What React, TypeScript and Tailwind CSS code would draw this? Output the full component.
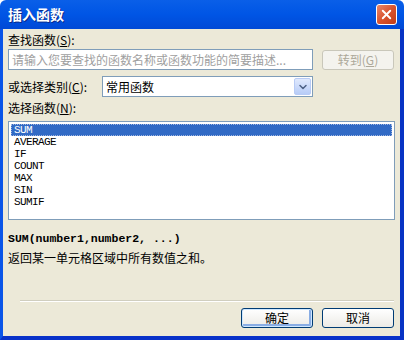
import { ChevronDown, X } from "lucide-react";

const cjk = { fontFamily: '"Noto Sans CJK SC", "Noto Sans", sans-serif' };
const mono = { fontFamily: '"Liberation Mono", "DejaVu Sans Mono", monospace' };

const items = ["SUM", "AVERAGE", "IF", "COUNT", "MAX", "SIN", "SUMIF"];

export default function App() {
  return (
    <div className="flex h-[340px] w-[404px] flex-col overflow-hidden text-[12px] text-black" style={cjk}>
      {/* title bar */}
      <div className="flex h-[29px] items-center justify-between rounded-t-[6px] bg-gradient-to-b from-[#0A5FE8] via-[#0055E5] to-[#0049D6] pl-[8px] pr-[7px]">
        <span className="text-[14px] font-bold text-white [text-shadow:1px_1px_0_#0A2A8A]">插入函数</span>
        <div className="flex h-[21px] w-[21px] items-center justify-center rounded-[3px] border border-white bg-gradient-to-br from-[#E9876A] via-[#D9532E] to-[#C13C17]">
          <X size={15} strokeWidth={3} className="text-white" />
        </div>
      </div>

      {/* client */}
      <div className="flex flex-1 flex-col border-b-[4px] border-l-[3px] border-r-[4px] border-b-[#0831C9] border-l-[#0A55E8] border-r-[#0733C4] bg-[#ECE9D8] pl-[5px] pr-[5px]">
        <div className="mt-[4px] h-[14px] leading-[14px]">
          查找函数(<span className="underline">S</span>):
        </div>
        <div className="mt-[2px] flex items-center">
          <div className="flex h-[21px] w-[305px] items-center border border-[#7F9DB9] bg-white px-[3px] text-[#A0A0A0]">
            请输入您要查找的函数名称或函数功能的简要描述...
          </div>
          <div className="ml-[9px] flex h-[20px] w-[72px] items-center justify-center rounded-[3px] border border-[#C9C7BA] bg-[#F4F3EE] text-[#ACA899]">
            转到(<span className="underline">G</span>)
          </div>
        </div>

        <div className="mt-[6px] flex items-center">
          <div className="w-[94px]">
            或选择类别(<span className="underline">C</span>):
          </div>
          <div className="flex h-[21px] w-[211px] items-center justify-between border border-[#7F9DB9] bg-white pl-[3px] pr-[1px]">
            <span>常用函数</span>
            <div className="flex h-[17px] w-[17px] items-center justify-center rounded-[2px] border border-[#B8CBF5] bg-gradient-to-b from-[#E0E9FD] to-[#B7CCF7]">
              <ChevronDown size={12} strokeWidth={3} className="text-[#4D6185]" />
            </div>
          </div>
        </div>

        <div className="mt-[4px] h-[14px] leading-[14px]">
          选择函数(<span className="underline">N</span>):
        </div>
        <div className="mt-[6px] h-[99px] border border-[#7F9DB9] bg-white p-[2px]" style={mono}>
          {items.map((name, i) => (
            <div
              key={name}
              className={
                i === 0
                  ? "flex h-[12px] items-center border border-dotted border-[#9FB5E0] bg-[#316AC5] pl-[2px] text-[11px] leading-[10px] tracking-[-0.6px] text-white"
                  : "flex h-[12px] items-center pl-[3px] text-[11px] leading-[12px] tracking-[-0.6px]"
              }
            >
              {name}
            </div>
          ))}
        </div>

        <div className="mt-[12px] h-[14px] text-[11.5px] font-bold leading-[14px]" style={mono}>
          SUM(number1,number2, ...)
        </div>
        <div className="mt-[5px] h-[14px] leading-[14px]">返回某一单元格区域中所有数值之和。</div>

        <div className="ml-[12px] mr-[1px] mt-[35px] h-[2px] border-t border-b border-t-[#D0CEBF] border-b-white" />

        <div className="mt-[6px] flex justify-end pr-[1px]">
          <button className="flex h-[20px] w-[72px] items-center justify-center rounded-[3px] border border-[#003C74] bg-gradient-to-b from-white to-[#ECEBE6] shadow-[inset_0_0_0_1px_#CEE7FF,inset_-1px_-1px_0_2px_#89ADE4]">
            确定
          </button>
          <button className="ml-[9px] flex h-[20px] w-[72px] items-center justify-center rounded-[3px] border border-[#003C74] bg-gradient-to-b from-white to-[#ECEBE6]">
            取消
          </button>
        </div>
      </div>
    </div>
  );
}
